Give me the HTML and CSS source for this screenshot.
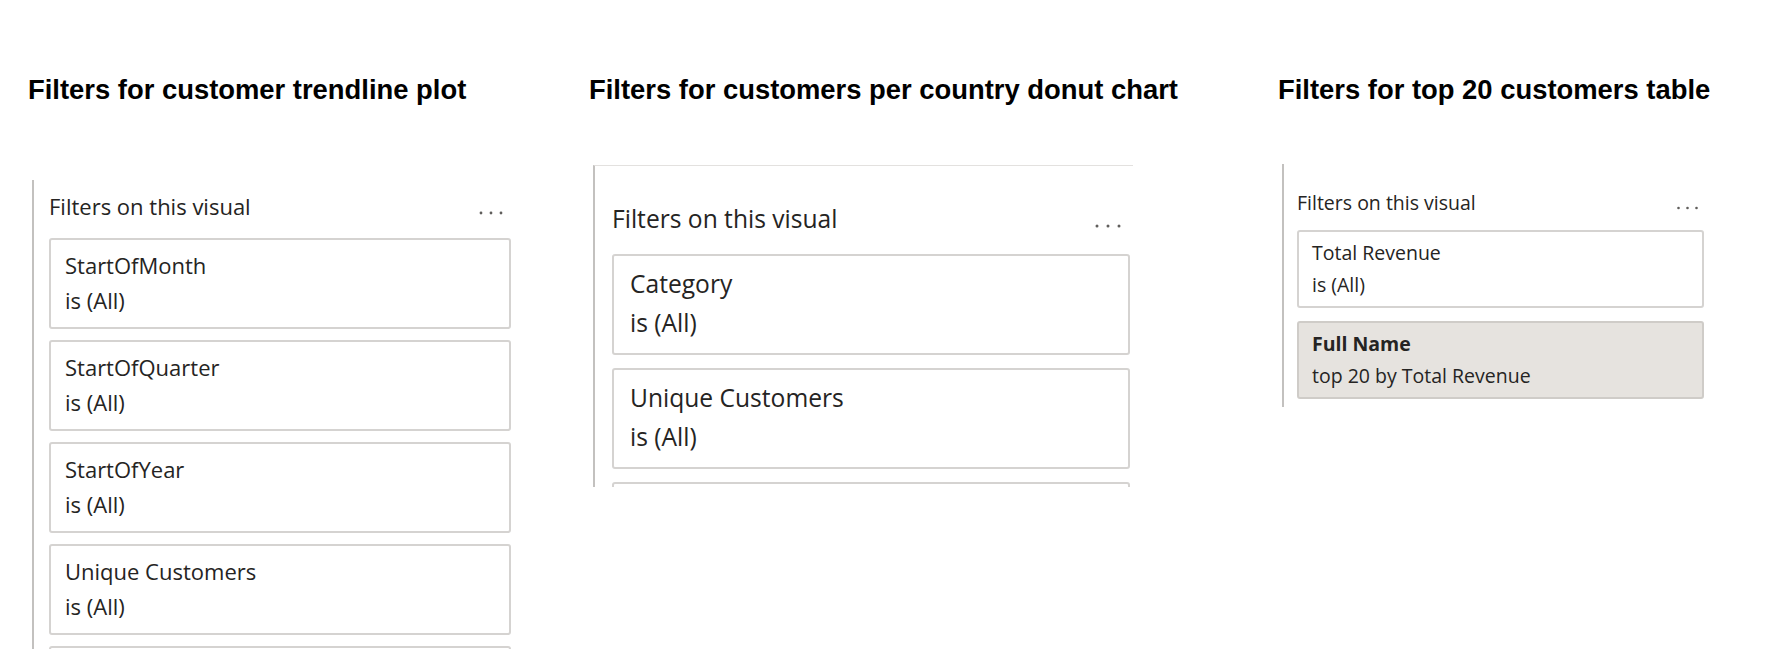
FILE: index.html
```html
<!DOCTYPE html>
<html lang="en">
<head>
<meta charset="utf-8">
<title>Visual filters</title>
<link rel="stylesheet" href="styles.css">
</head>
<body>
<div class="page">
  <section class="col col-trend">
    <h2 class="title">Filters for customer trendline plot</h2>
    <div class="pane pane-trend">
      <div class="pane-head">
        <span class="pane-label">Filters on this visual</span>
        <svg class="more" width="24" height="4" viewBox="0 0 24 4"><circle cx="2" cy="2" r="1.4"/><circle cx="12" cy="2" r="1.4"/><circle cx="22" cy="2" r="1.4"/></svg>
      </div>
      <div class="cards">
        <div class="card"><div class="card-name">StartOfMonth</div><div class="card-state">is (All)</div></div>
        <div class="card"><div class="card-name">StartOfQuarter</div><div class="card-state">is (All)</div></div>
        <div class="card"><div class="card-name">StartOfYear</div><div class="card-state">is (All)</div></div>
        <div class="card"><div class="card-name">Unique Customers</div><div class="card-state">is (All)</div></div>
        <div class="card card-cut"></div>
      </div>
    </div>
  </section>

  <section class="col col-donut">
    <h2 class="title">Filters for customers per country donut chart</h2>
    <div class="pane pane-donut">
      <div class="pane-head">
        <span class="pane-label">Filters on this visual</span>
        <svg class="more" width="26" height="4" viewBox="0 0 26 4"><circle cx="2" cy="2" r="1.5"/><circle cx="13" cy="2" r="1.5"/><circle cx="24" cy="2" r="1.5"/></svg>
      </div>
      <div class="cards">
        <div class="card"><div class="card-name">Category</div><div class="card-state">is (All)</div></div>
        <div class="card"><div class="card-name">Unique Customers</div><div class="card-state">is (All)</div></div>
        <div class="card card-cut"></div>
      </div>
    </div>
  </section>

  <section class="col col-table">
    <h2 class="title">Filters for top 20 customers table</h2>
    <div class="pane pane-table">
      <div class="pane-head">
        <span class="pane-label">Filters on this visual</span>
        <svg class="more" width="21" height="4" viewBox="0 0 21 4"><circle cx="1.5" cy="2" r="1.3"/><circle cx="10.5" cy="2" r="1.3"/><circle cx="19.5" cy="2" r="1.3"/></svg>
      </div>
      <div class="cards">
        <div class="card"><div class="card-name">Total Revenue</div><div class="card-state">is (All)</div></div>
        <div class="card card-active"><div class="card-name">Full Name</div><div class="card-state">top 20 by Total Revenue</div></div>
      </div>
    </div>
  </section>
</div>
</body>
</html>
```

FILE: styles.css
```css
html, body {
  margin: 0;
  background: #ffffff;
}

.page {
  display: flex;
  align-items: flex-start;
  padding: 74px 0 0 28px;
  font-family: "Open Sans", "Noto Sans", sans-serif;
  color: #252423;
}

.col {
  display: flex;
  flex-direction: column;
  align-items: flex-start;
}

.col-trend { width: 561px; }
.col-donut { width: 689px; }
.col-table { flex: 1; }

.title {
  margin: 0;
  font: bold 27.4px/32px "Liberation Sans", Arial, sans-serif;
  color: #000000;
  white-space: nowrap;
}

.pane {
  box-sizing: border-box;
  margin-left: 4px;
  border-left: 2px solid #c3c1bf;
  overflow: hidden;
}

.pane-head {
  display: flex;
  justify-content: space-between;
  align-items: baseline;
}

.pane-label {
  white-space: nowrap;
}

.more {
  display: inline-block;
  fill: #605e5c;
}

.cards {
  display: flex;
  flex-direction: column;
}

.card {
  box-sizing: border-box;
  flex-shrink: 0;
  border: 2px solid #d5d3d1;
  border-radius: 3px;
  background: #ffffff;
  white-space: nowrap;
}

.card-active {
  background: #e6e3df;
  border-color: #cfccc8;
}

.card-active .card-name {
  font-weight: 700;
}

/* trendline pane */
.pane-trend {
  margin-top: 74px;
  width: 492px;
  height: 469px;
  padding: 11px 0 0 15px;
  font-size: 22px;
}
.pane-trend .pane-head {
  line-height: 30px;
  width: 462px;
  box-sizing: border-box;
  padding-right: 8px;
  margin-bottom: 17px;
}
.pane-trend .cards { gap: 11px; }
.pane-trend .card {
  width: 462px;
  height: 91px;
  padding: 8px 14px 0;
  line-height: 35px;
}

/* donut pane */
.pane-donut {
  margin-top: 59px;
  width: 540px;
  height: 322px;
  border-top: 1px solid #e3e1df;
  padding: 36px 3px 0 17px;
  font-size: 24.6px;
}
.pane-donut .pane-head {
  line-height: 34px;
  padding-right: 9px;
  margin-bottom: 18px;
}
.pane-donut .cards { gap: 13px; }
.pane-donut .card {
  height: 101px;
  padding: 8px 16px 0;
  line-height: 39px;
}

/* table pane */
.pane-table {
  margin-top: 58px;
  width: 428px;
  height: 243px;
  padding: 25px 0 0 13px;
  font-size: 19.5px;
}
.pane-table .pane-head {
  line-height: 28px;
  width: 407px;
  box-sizing: border-box;
  padding-right: 6px;
  margin-bottom: 13px;
}
.pane-table .cards { gap: 13px; }
.pane-table .card {
  width: 407px;
  height: 78px;
  padding: 5px 13px 0;
  line-height: 31.5px;
}
```
